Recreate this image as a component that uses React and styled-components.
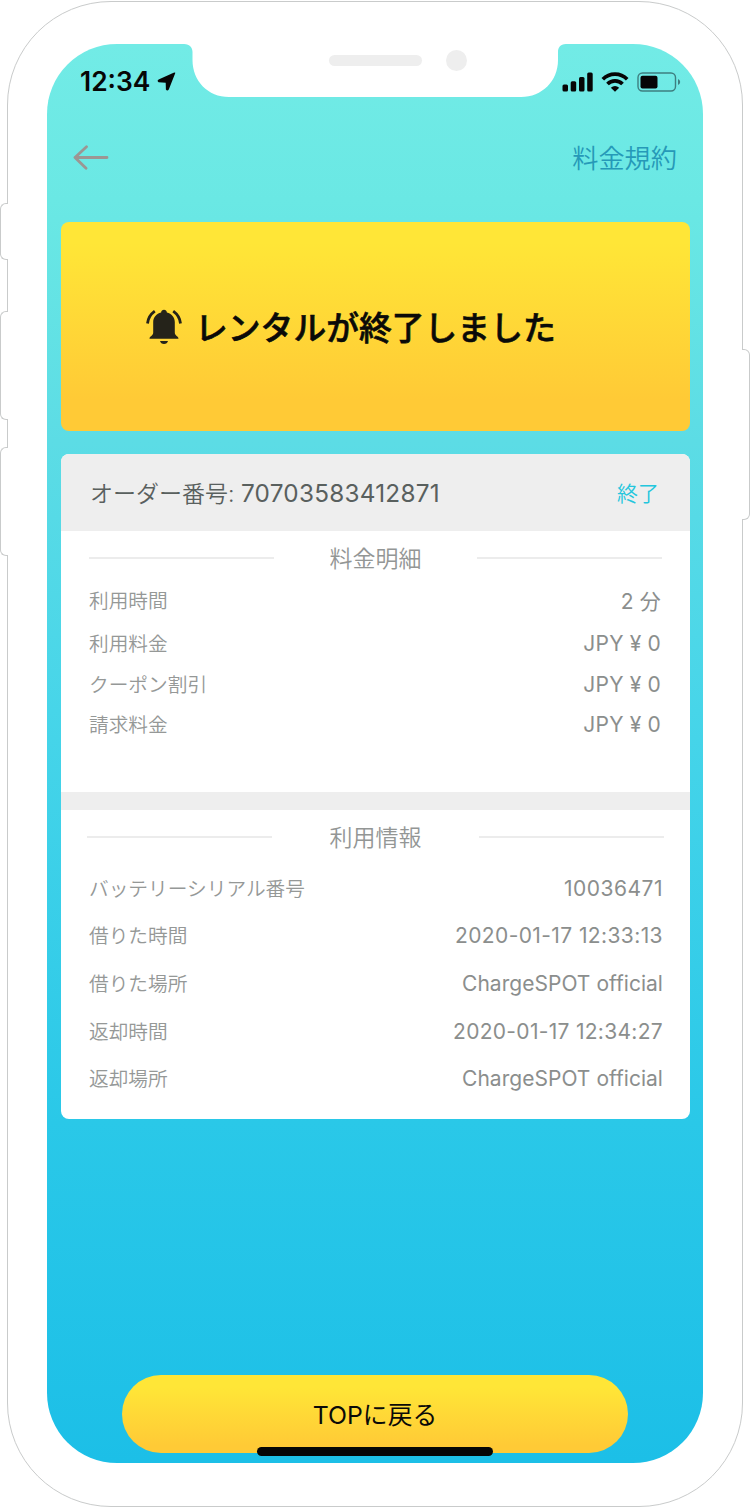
import styled, { createGlobalStyle } from "styled-components";

const fees = [
  { label: "利用時間", value: "2 分", space: 9 },
  { label: "利用料金", value: "JPY ¥ 0" },
  { label: "クーポン割引", value: "JPY ¥ 0" },
  { label: "請求料金", value: "JPY ¥ 0" },
];

const usage = [
  { label: "バッテリーシリアル番号", value: "10036471", tracking: 0.5 },
  { label: "借りた時間", value: "2020-01-17 12:33:13", tracking: 0.4 },
  { label: "借りた場所", value: "ChargeSPOT official", tracking: 0.03 },
  { label: "返却時間", value: "2020-01-17 12:34:27", tracking: 0.3 },
  { label: "返却場所", value: "ChargeSPOT official", tracking: 0.03 },
];

export default function App() {
  return (
    <Page>
      <GlobalStyle />
      <Phone>
        <SideButton $top={202} $height={57} />
        <SideButton $top={310} $height={109} />
        <SideButton $top={446} $height={109} />
        <SideButton $right $top={348} $height={171} />
        <Screen>
          <Notch />
          <StatusBar>
            <Clock>12:34</Clock>
            <LocationIcon />
            <StatusIcons />
          </StatusBar>
          <NavBar>
            <BackIcon />
            <NavLink>料金規約</NavLink>
          </NavBar>
          <Banner>
            <BellIcon />
            <BannerTitle>レンタルが終了しました</BannerTitle>
          </Banner>
          <Card>
            <CardHeader>
              <Order>
                オーダー番号: <OrderNumber>70703583412871</OrderNumber>
              </Order>
              <State>終了</State>
            </CardHeader>
            <Fees>
              <SectionTitle>
                <span>料金明細</span>
              </SectionTitle>
              {fees.map((item) => (
                <Row key={item.label} $height={item.space ? 29 : 40.5} $space={item.space}>
                  <Label>{item.label}</Label>
                  <Value $tracking={0.2}>{item.value}</Value>
                </Row>
              ))}
            </Fees>
            <Usage>
              <SectionTitle>
                <span>利用情報</span>
              </SectionTitle>
              {usage.map((item) => (
                <Row key={item.label} $height={47.6} $inset={2}>
                  <Label>{item.label}</Label>
                  <Value $tracking={item.tracking}>{item.value}</Value>
                </Row>
              ))}
            </Usage>
          </Card>
          <TopButton>TOPに戻る</TopButton>
          <HomeIndicator />
        </Screen>
      </Phone>
    </Page>
  );
}

function Notch() {
  return (
    <NotchShape width="382" height="54" viewBox="0 0 382 54">
      <path
        d="M0 0H382C376 0 374 4 374 8V16C374 37 358 53 337 53H45C24 53 8.500 37 8.500 16V8C8.500 4 6 0 0 0Z"
        fill="#fff"
      />
      <rect x="145" y="11" width="93" height="11" rx="5.500" fill="#eee" />
      <circle cx="272.500" cy="16.500" r="10.500" fill="#eee" />
    </NotchShape>
  );
}

function LocationIcon() {
  return (
    <svg width="19" height="19" viewBox="0 0 19 19">
      <path d="M18.200 1.200 11.800 17.600Q10.200 19.400 8.900 17.600L8.700 10.800 1.600 10.300Q-.4 8.800 1.600 7.400L16.600 0.700Q18.600 -.1 18.200 1.200Z" fill="#060606" />
    </svg>
  );
}

function StatusIcons() {
  return (
    <Indicators width="120" height="20" viewBox="0 0 120 20" fill="#060606">
      <rect x="0.500" y="12.500" width="5.500" height="7" rx="1.500" />
      <rect x="8.700" y="9.300" width="5.500" height="10.200" rx="1.500" />
      <rect x="17" y="5" width="5.500" height="14.500" rx="1.500" />
      <rect x="25.200" y="0.600" width="5.500" height="18.900" rx="1.500" />
      <g fill="none" stroke="#060606" strokeWidth="3.700">
        <path d="M40.800 7.300a17.200 17.200 0 0 1 24.400 0" />
        <path d="M45.500 12a10.500 10.500 0 0 1 15 0" />
      </g>
      <path d="M48.800 15.800q4.200-3.400 8.400 0L53 19.800z" />
      <rect x="76" y="1" width="37.500" height="18" rx="4.500" fill="none" stroke="#3e7f80" strokeWidth="1.400" />
      <rect x="78.500" y="3.800" width="17" height="12.800" rx="2" />
      <path d="M116 7v6q2.200-.8 2.200-3T116 7z" fill="#3e7f80" />
    </Indicators>
  );
}

function BackIcon() {
  return (
    <svg width="36" height="25" viewBox="0 0 36 25" fill="none" stroke="#9c9693" strokeWidth="2.800" strokeLinecap="round" strokeLinejoin="round">
      <path d="M34 12.500H2M13.500 1.700 2 12.500l11 10.800" />
    </svg>
  );
}

function BellIcon() {
  return (
    <svg width="36" height="36" viewBox="0 0 36 36" fill="#25231a">
      <path d="M18 .8c1.600 0 2.700 1 2.900 2.600C25.500 4.700 28.800 8.200 28.800 13v10.500c0 3.500 3.700 3.500 3.700 6.200H3.500c0-2.700 3.700-2.700 3.700-6.200V13c0-4.800 3.300-8.300 7.900-9.600C15.300 1.800 16.400.8 18 .8Z" />
      <path d="M14 32h8q-.8 3-4 3t-4-3z" />
      <g fill="none" stroke="#25231a" strokeWidth="2.800">
        <path d="M1.500 14.500Q2.200 7 8.800 2.200" />
        <path d="M34.500 14.500Q33.800 7 27.200 2.200" />
      </g>
    </svg>
  );
}

const GlobalStyle = createGlobalStyle`
  body {
    margin: 0;
    background: #fff;
  }

  * {
    box-sizing: border-box;
  }
`;

const Page = styled.div`
  width: 751px;
  height: 1507px;
  padding: 1px 8px 0 7px;
  overflow: hidden;
  font-family: Inter, "Noto Sans CJK JP", sans-serif;
`;

const Phone = styled.div`
  position: relative;
  height: 1506px;
  padding: 42px 39px 43px;
  border: 1px solid #c9cbcb;
  border-radius: 104px;
`;

const SideButton = styled.div`
  position: absolute;
  top: ${(p) => p.$top - 1}px;
  ${(p) => (p.$right ? "right: -8px;" : "left: -8px;")}
  width: 8px;
  height: ${(p) => p.$height}px;
  background: #fff;
  border: 1px solid #c9cbcb;
  ${(p) =>
    p.$right
      ? "border-left: 0; border-radius: 0 6px 6px 0;"
      : "border-right: 0; border-radius: 6px 0 0 6px;"}
`;

const Screen = styled.div`
  position: relative;
  height: 1419px;
  padding: 0 13px 0 14px;
  display: flex;
  flex-direction: column;
  border-radius: 70px;
  background: linear-gradient(
    #72ebe6 0%,
    #6ae8e4 11%,
    #5cdce5 28%,
    #47d5e9 47%,
    #2ac8e8 76%,
    #1cbfe7 100%
  );
`;

const NotchShape = styled.svg`
  position: absolute;
  top: 0;
  left: 137px;
`;

const StatusBar = styled.div`
  height: 75px;
  padding: 0 8px 0 19px;
  display: flex;
  align-items: center;
`;

const Clock = styled.span`
  width: 77px;
  padding-bottom: 1px;
  color: #060606;
  font-size: 26.4px;
  font-weight: 600;
`;

const Indicators = styled.svg`
  margin-left: auto;
`;

const NavBar = styled.div`
  height: 76px;
  padding: 0 13px 0 12px;
  display: flex;
  align-items: center;
  justify-content: space-between;
`;

const NavLink = styled.span`
  padding-bottom: 1px;
  color: #2699b8;
  font-size: 26.2px;
  font-weight: 350;
`;

const Banner = styled.div`
  height: 209px;
  margin-top: 27px;
  padding: 0 85px;
  display: flex;
  align-items: center;
  border-radius: 8px;
  background: linear-gradient(#ffe637 10%, #ffca36 85%);
`;

const BannerTitle = styled.h1`
  margin: 0 0 0 13px;
  padding-bottom: 3px;
  color: #0a0a08;
  font-size: 32.8px;
  font-weight: 500;
  -webkit-text-stroke: 0.6px #0a0a08;
  white-space: nowrap;
`;

const Card = styled.div`
  height: 665px;
  margin-top: 23px;
  border-radius: 8px;
  overflow: hidden;
  background: #fff;
`;

const CardHeader = styled.div`
  height: 77px;
  padding: 0 31px 2px 29px;
  display: flex;
  align-items: center;
  justify-content: space-between;
  background: #eee;
`;

const Order = styled.div`
  color: #59605e;
  font-size: 23px;
  font-weight: 350;
  white-space: pre;
`;

const OrderNumber = styled.span`
  font-size: 24.3px;
  font-weight: 400;
  letter-spacing: 0.25px;
`;

const State = styled.span`
  color: #23c6dd;
  font-size: 21px;
  font-weight: 350;
`;

const Fees = styled.div`
  height: 261px;
  padding: 0 28px;
`;

const Usage = styled.div`
  padding: 0 26px;
  border-top: 18px solid #eee;
`;

const SectionTitle = styled.h2`
  height: 54px;
  margin: 0;
  display: flex;
  align-items: center;
  justify-content: space-between;
  color: #939695;
  font-size: 23px;
  font-weight: 350;

  span {
    padding-bottom: 2px;
  }

  &::before,
  &::after {
    content: "";
    width: 185px;
    height: 2px;
    background: #ececec;
  }
`;

const Row = styled.div`
  height: ${(p) => p.$height}px;
  margin-bottom: ${(p) => p.$space || 0}px;
  padding: 0 1px 0 ${(p) => p.$inset || 0}px;
  display: flex;
  align-items: center;
  justify-content: space-between;
`;

const Label = styled.span`
  padding-bottom: 1px;
  color: #959897;
  font-size: 19.7px;
  font-weight: 350;
`;

const Value = styled.span`
  padding-top: 1px;
  color: #8b8e8d;
  font-size: 21px;
  font-weight: 400;
  letter-spacing: ${(p) => p.$tracking}px;
`;

const TopButton = styled.button`
  width: 506px;
  height: 78px;
  margin: auto auto 10px 61px;
  padding: 0 0 2px;
  border: 0;
  border-radius: 39px;
  background: linear-gradient(#ffe637 15%, #ffca36 90%);
  color: #0a0a08;
  font-family: inherit;
  font-size: 24.8px;
  font-weight: 400;
`;

const HomeIndicator = styled.div`
  position: absolute;
  left: 210px;
  bottom: 7px;
  width: 236px;
  height: 9px;
  border-radius: 5px;
  background: #060606;
`;
